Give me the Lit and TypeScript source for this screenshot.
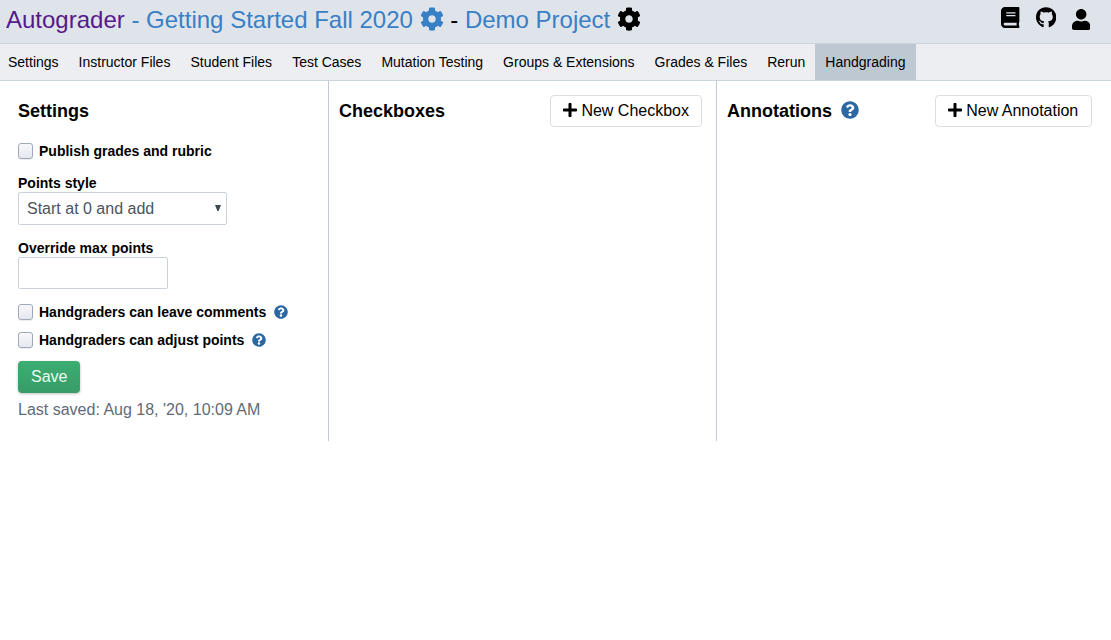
import { LitElement, html, css, svg } from "lit";
import { customElement, property } from "lit/decorators.js";
import { classMap } from "lit/directives/class-map.js";

interface Glyph {
  w: number;
  d: string;
}

const GLYPHS: Record<string, Glyph> = {
  cog: {
    w: 512,
    d: "M487.4 315.7l-42.6-24.6c4.3-23.2 4.3-47 0-70.2l42.6-24.6c4.9-2.8 7.1-8.6 5.5-14-11.1-35.6-30-67.8-54.7-94.6-3.8-4.1-10-5.1-14.8-2.3L380.8 110c-17.9-15.4-38.5-27.3-60.8-35.1V25.8c0-5.6-3.9-10.5-9.4-11.7-36.7-8.2-74.3-7.8-109.2 0-5.5 1.2-9.4 6.1-9.4 11.7V75c-22.2 7.9-42.8 19.8-60.8 35.1L88.7 85.5c-4.9-2.8-11-1.9-14.8 2.3-24.7 26.7-43.6 58.9-54.7 94.6-1.7 5.4.6 11.2 5.5 14L67.3 221c-4.3 23.2-4.3 47 0 70.2l-42.6 24.6c-4.9 2.8-7.1 8.6-5.5 14 11.1 35.6 30 67.8 54.7 94.6 3.8 4.1 10 5.1 14.8 2.3l42.6-24.6c17.9 15.4 38.5 27.3 60.8 35.1v49.2c0 5.6 3.9 10.5 9.4 11.7 36.7 8.2 74.3 7.8 109.2 0 5.5-1.2 9.4-6.1 9.4-11.7v-49.2c22.2-7.9 42.8-19.8 60.8-35.1l42.6 24.6c4.9 2.8 11 1.9 14.8-2.3 24.7-26.7 43.6-58.9 54.7-94.6 1.5-5.5-.7-11.3-5.6-14.1zM256 336c-44.1 0-80-35.9-80-80s35.9-80 80-80 80 35.9 80 80-35.9 80-80 80z",
  },
  book: {
    w: 448,
    d: "M448 360V24c0-13.3-10.7-24-24-24H96C43 0 0 43 0 96v320c0 53 43 96 96 96h328c13.3 0 24-10.7 24-24v-16c0-7.5-3.5-14.3-8.9-18.7-4.2-15.4-4.2-59.3 0-74.7 5.4-4.3 8.9-11.1 8.9-18.6zM128 134c0-3.3 2.7-6 6-6h212c3.3 0 6 2.7 6 6v20c0 3.3-2.7 6-6 6H134c-3.3 0-6-2.7-6-6v-20zm0 64c0-3.3 2.7-6 6-6h212c3.3 0 6 2.7 6 6v20c0 3.3-2.7 6-6 6H134c-3.3 0-6-2.7-6-6v-20zm253.4 250H96c-17.7 0-32-14.3-32-32 0-17.6 14.4-32 32-32h285.4c-1.9 17.1-1.9 46.9 0 64z",
  },
  github: {
    w: 496,
    d: "M165.9 397.4c0 2-2.3 3.6-5.2 3.6-3.3.3-5.6-1.3-5.6-3.6 0-2 2.3-3.6 5.2-3.6 3-.3 5.6 1.3 5.6 3.6zm-31.1-4.5c-.7 2 1.3 4.3 4.3 4.9 2.6 1 5.6 0 6.2-2s-1.3-4.3-4.3-5.2c-2.6-.7-5.5.3-6.2 2.3zm44.2-1.7c-2.9.7-4.9 2.6-4.6 4.9.3 2 2.9 3.3 5.9 2.6 2.9-.7 4.9-2.6 4.6-4.6-.3-1.9-3-3.2-5.9-2.9zM244.8 8C106.1 8 0 113.3 0 252c0 110.9 69.8 205.8 169.5 239.2 12.8 2.3 17.3-5.6 17.3-12.1 0-6.2-.3-40.4-.3-61.4 0 0-70 15-84.7-29.8 0 0-11.4-29.1-27.8-36.6 0 0-22.9-15.7 1.6-15.4 0 0 24.9 2 38.6 25.8 21.9 38.6 58.6 27.5 72.9 20.9 2.3-16 8.8-27.1 16-33.7-55.9-6.2-112.3-14.3-112.3-110.5 0-27.5 7.6-41.3 23.6-58.9-2.6-6.5-11.1-33.3 2.6-67.9 20.9-6.5 69 27 69 27 20-5.6 41.5-8.5 62.8-8.5s42.8 2.9 62.8 8.5c0 0 48.1-33.6 69-27 13.7 34.7 5.2 61.4 2.6 67.9 16 17.7 25.8 31.5 25.8 58.9 0 96.5-58.9 104.2-114.8 110.5 9.2 7.9 17 22.9 17 46.4 0 33.7-.3 75.4-.3 83.6 0 6.5 4.6 14.4 17.3 12.1C428.2 457.8 496 362.9 496 252 496 113.3 383.5 8 244.8 8z",
  },
  user: {
    w: 448,
    d: "M224 256c70.7 0 128-57.3 128-128S294.7 0 224 0 96 57.3 96 128s57.3 128 128 128zm89.6 32h-16.7c-22.2 10.2-46.9 16-72.9 16s-50.6-5.8-72.9-16h-16.7C60.2 288 0 348.2 0 422.4V464c0 26.5 21.5 48 48 48h352c26.5 0 48-21.5 48-48v-41.6c0-74.2-60.2-134.4-134.4-134.4z",
  },
  help: {
    w: 512,
    d: "M504 256c0 136.997-111.043 248-248 248S8 392.997 8 256C8 119.083 119.043 8 256 8s248 111.083 248 248zM262.655 90c-54.497 0-89.255 22.957-116.549 63.758-3.536 5.286-2.353 12.415 2.715 16.258l34.699 26.31c5.205 3.947 12.621 3.008 16.665-2.122 17.864-22.658 30.113-35.797 57.303-35.797 20.429 0 45.698 13.148 45.698 32.958 0 14.976-12.363 22.667-32.534 33.976C247.128 238.528 216 254.941 216 296v4c0 6.627 5.373 12 12 12h56c6.627 0 12-5.373 12-12v-1.333c0-28.462 83.186-29.647 83.186-106.667 0-58.002-60.165-102-116.531-102zM256 338c-25.365 0-46 20.635-46 46 0 25.364 20.635 46 46 46s46-20.636 46-46c0-25.365-20.635-46-46-46z",
  },
  plus: {
    w: 448,
    d: "M416 208H272V64c0-17.67-14.33-32-32-32h-32c-17.67 0-32 14.33-32 32v144H32c-17.67 0-32 14.33-32 32v32c0 17.67 14.33 32 32 32h144v144c0 17.67 14.33 32 32 32h32c17.67 0 32-14.33 32-32V304h144c17.67 0 32-14.33 32-32v-32c0-17.67-14.33-32-32-32z",
  },
};

@customElement("ag-icon")
export class AgIcon extends LitElement {
  @property() name = "cog";

  static styles = css`
    :host {
      display: inline-block;
      height: 1em;
      flex: none;
    }
    .glyph {
      display: block;
      height: 1em;
      width: auto;
      fill: currentColor;
    }
  `;

  render() {
    const g = GLYPHS[this.name];
    return html`<svg class="glyph" viewBox="0 0 ${g.w} 512">${svg`<path d=${g.d}></path>`}</svg>`;
  }
}

@customElement("ag-checkbox")
export class AgCheckbox extends LitElement {
  @property() label = "";
  @property({ type: Boolean }) help = false;

  static styles = css`
    :host {
      display: flex;
      align-items: center;
      height: 18px;
      font-weight: bold;
      font-size: 14px;
    }
    .box {
      box-sizing: border-box;
      width: 15px;
      height: 16px;
      margin-right: 6px;
      border: 1px solid #a0a8ba;
      border-radius: 3px;
      background: linear-gradient(#f8f8fb, #e6e8f0);
      box-shadow: 0 1px 1px rgba(0, 0, 0, 0.08);
    }
    .help {
      margin-left: 8px;
      font-size: 14px;
      color: #2b68a3;
    }
  `;

  render() {
    return html`
      <span class="box"></span>
      <span>${this.label}</span>
      ${this.help ? html`<ag-icon class="help" name="help"></ag-icon>` : null}
    `;
  }
}

@customElement("app-root")
export class AppRoot extends LitElement {
  private tabs = [
    "Settings",
    "Instructor Files",
    "Student Files",
    "Test Cases",
    "Mutation Testing",
    "Groups & Extensions",
    "Grades & Files",
    "Rerun",
    "Handgrading",
  ];
  private active = "Handgrading";

  static styles = css`
    :host {
      display: block;
      min-height: 640px;
      background: #fff;
      color: #000;
      font-family: "Liberation Sans", Arial, sans-serif;
      font-size: 16px;
    }
    .header {
      display: flex;
      justify-content: space-between;
      box-sizing: border-box;
      height: 44px;
      padding: 0 21px 0 6px;
      background: #dfe4eb;
      border-bottom: 1px solid #cbd3dc;
    }
    .title {
      display: flex;
      align-items: center;
      height: 39px;
      font-size: 24px;
      white-space: pre;
    }
    .cog {
      margin-bottom: 2px;
    }
    .visited {
      color: #551a8b;
    }
    .link {
      color: #3880c6;
    }
    .tools {
      display: flex;
      padding-top: 7px;
      font-size: 21px;
    }
    .github {
      margin: 0 15.5px 0 16px;
    }
    .user {
      margin-top: 2px;
    }
    .nav {
      display: flex;
      box-sizing: border-box;
      height: 37px;
      background: #edeef2;
      border-bottom: 1px solid #cbd3dc;
      font-size: 14px;
      line-height: 36px;
    }
    .tab {
      padding: 0 10px;
      white-space: nowrap;
    }
    .tab:first-child {
      padding-left: 8px;
    }
    .selected {
      background: #bec8d2;
    }
    .columns {
      display: grid;
      grid-template-columns: 329px 388px 394px;
      height: 360px;
    }
    .column {
      box-sizing: border-box;
      padding: 14px 14px 0 10px;
      border-right: 1px solid #c3c9d3;
    }
    .settings {
      display: flex;
      flex-direction: column;
      align-items: flex-start;
      padding-left: 18px;
    }
    .last {
      padding-right: 19px;
      border-right: 0;
    }
    .head {
      display: flex;
      align-items: center;
      height: 32px;
    }
    .heading {
      font-size: 18px;
      font-weight: bold;
    }
    .head-help {
      margin: 0 0 2px 9px;
      font-size: 18px;
      color: #2b68a3;
    }
    .add {
      display: flex;
      align-items: center;
      box-sizing: border-box;
      height: 32px;
      margin-left: auto;
      padding: 0 12px;
      border: 1px solid #dbdddf;
      border-radius: 4px;
      white-space: nowrap;
    }
    .plus {
      margin: 0 4px 2px 0;
    }
    .annotation {
      width: 157px;
      padding-left: 11.5px;
    }
    .annotation .plus {
      margin-right: 4.7px;
    }
    .publish {
      margin-top: 15px;
    }
    .label {
      font-size: 14px;
      font-weight: bold;
      line-height: 17px;
    }
    .style-label {
      margin-top: 15px;
    }
    .field {
      display: flex;
      align-items: center;
      justify-content: space-between;
      box-sizing: border-box;
      border: 1px solid #cbd2d9;
      border-radius: 2px;
    }
    .select {
      width: 209px;
      height: 33px;
      padding: 0 5px 0 8px;
      color: #4b545d;
    }
    .caret {
      width: 6px;
      height: 6px;
      margin-bottom: 1px;
      background: #3f474f;
      clip-path: polygon(0 0, 100% 0, 60% 100%, 40% 100%);
    }
    .max-label {
      margin-top: 15px;
    }
    .input {
      width: 150px;
      height: 32px;
    }
    .comments {
      margin-top: 14px;
    }
    .adjust {
      margin-top: 10px;
    }
    .save {
      box-sizing: border-box;
      height: 32px;
      margin-top: 12px;
      padding: 0 13px;
      border-radius: 4px;
      background: linear-gradient(#3bae72, #389c68);
      box-shadow: 0 1px 3px rgba(0, 0, 0, 0.25);
      color: #eefaf3;
      line-height: 31px;
    }
    .saved {
      margin-top: 8px;
      color: #5f6b77;
      line-height: 18px;
    }
  `;

  render() {
    return html`
      <header class="header">
        <div class="title"><span class="visited">Autograder</span><span class="link"> - Getting Started Fall 2020 </span><ag-icon class="link cog" name="cog"></ag-icon><span> - </span><span class="link">Demo Project </span><ag-icon class="cog" name="cog"></ag-icon></div>
        <div class="tools">
          <ag-icon name="book"></ag-icon>
          <ag-icon class="github" name="github"></ag-icon>
          <ag-icon class="user" name="user"></ag-icon>
        </div>
      </header>
      <nav class="nav">
        ${this.tabs.map(
          (t) => html`<div class=${classMap({ tab: true, selected: t === this.active })}>${t}</div>`
        )}
      </nav>
      <main class="columns">
        <section class="column settings">
          <div class="head"><span class="heading">Settings</span></div>
          <ag-checkbox class="publish" label="Publish grades and rubric"></ag-checkbox>
          <div class="label style-label">Points style</div>
          <div class="field select"><span>Start at 0 and add</span><span class="caret"></span></div>
          <div class="label max-label">Override max points</div>
          <div class="field input"></div>
          <ag-checkbox class="comments" label="Handgraders can leave comments" help></ag-checkbox>
          <ag-checkbox class="adjust" label="Handgraders can adjust points" help></ag-checkbox>
          <div class="save">Save</div>
          <div class="saved">Last saved: Aug 18, '20, 10:09 AM</div>
        </section>
        <section class="column">
          <div class="head">
            <span class="heading">Checkboxes</span>
            <div class="add"><ag-icon class="plus" name="plus"></ag-icon>New Checkbox</div>
          </div>
        </section>
        <section class="column last">
          <div class="head">
            <span class="heading">Annotations</span>
            <ag-icon class="head-help" name="help"></ag-icon>
            <div class="add annotation"><ag-icon class="plus" name="plus"></ag-icon>New Annotation</div>
          </div>
        </section>
      </main>
    `;
  }
}
